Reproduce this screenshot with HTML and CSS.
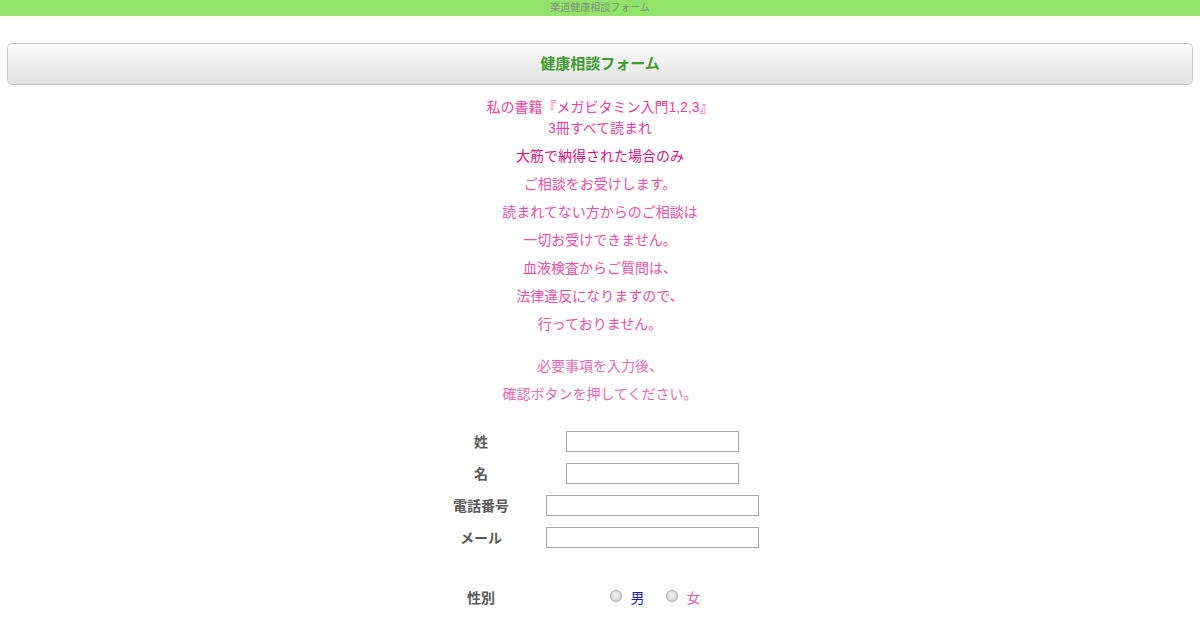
FILE: index.html
```html
<!DOCTYPE html>
<html lang="ja">
<head>
  <meta charset="UTF-8" />
  <title>楽道健康相談フォーム</title>
  <link rel="stylesheet" href="styles.css">
</head>
<body>

<div class="top-bar">楽道健康相談フォーム</div>

<div class="title-box">健康相談フォーム</div>

<div class="intro">
  <p class="books">私の書籍『メガビタミン入門1,2,3』<br>3冊すべて読まれ</p>
  <p class="deep">大筋で納得された場合のみ</p>
  <p>ご相談をお受けします。</p>
  <p>読まれてない方からのご相談は</p>
  <p>一切お受けできません。</p>
  <p>血液検査からご質問は、</p>
  <p>法律違反になりますので、</p>
  <p>行っておりません。</p>
</div>

<div class="intro notice">
  <p>必要事項を入力後、</p>
  <p>確認ボタンを押してください。</p>
</div>

<form class="form">
  <label class="field-label" for="sei">姓</label>
  <div class="field"><input id="sei" class="short" type="text"></div>

  <label class="field-label" for="mei">名</label>
  <div class="field"><input id="mei" class="short" type="text"></div>

  <label class="field-label" for="tel">電話番号</label>
  <div class="field"><input id="tel" class="long" type="text"></div>

  <label class="field-label" for="mail">メール</label>
  <div class="field"><input id="mail" class="long" type="text"></div>

  <div class="field-label gender-row">性別</div>
  <div class="field gender gender-row">
    <label class="radio male"><input type="radio" name="sex" value="male">男</label>
    <label class="radio female"><input type="radio" name="sex" value="female">女</label>
  </div>
</form>

</body>
</html>
```

FILE: styles.css
```css
* { box-sizing: border-box; }
body {
  margin: 0;
  background-color: #fff;
  color: #555;
  font-family: 'Liberation Sans', 'Noto Sans CJK JP', sans-serif;
  font-size: 14px;
}
.top-bar {
  height: 16px;
  line-height: 15px;
  background-color: #92e36a;
  color: #7f8f78;
  font-size: 10px;
  text-align: center;
}
.title-box {
  margin: 27px 7px 0;
  height: 42px;
  line-height: 40px;
  border: 1px solid #c8c8c8;
  border-radius: 5px;
  background: linear-gradient(#fbfbfb, #e2e2e2);
  color: #3f9b30;
  font-size: 15px;
  font-weight: bold;
  text-align: center;
}
.intro {
  margin-top: 12px;
  text-align: center;
  color: #ef4fa6;
}
.intro p {
  margin: 0;
  line-height: 28px;
}
.intro .books {
  line-height: 21px;
  margin-bottom: 3px;
  color: #f03f9f;
}
.intro .deep {
  color: #e2137f;
}
.notice {
  margin-top: 14px;
  color: #f067b2;
}
.form {
  display: grid;
  grid-template-columns: 100px 243px;
  grid-template-rows: repeat(4, 32px) 60px;
  justify-content: center;
  margin: 17px 0 0 5px;
}
.field-label {
  display: flex;
  align-items: center;
  justify-content: center;
  font-weight: bold;
  color: #5a5a5a;
}
.field {
  display: flex;
  align-items: center;
  justify-content: center;
}
.field input[type="text"] {
  height: 21px;
  border: 1px solid #a9a9a9;
  padding: 0 3px;
  margin: 0;
}
.short { width: 173px; }
.long { width: 213px; }
.gender-row {
  padding-top: 28px;
}
.gender {
  gap: 21px;
  padding-left: 5px;
}
.radio {
  display: flex;
  align-items: center;
  gap: 9px;
}
.radio input {
  appearance: none;
  width: 12px;
  height: 12px;
  margin: -3px 0 0;
  border: 1px solid #a5a5a5;
  border-radius: 50%;
  background: radial-gradient(circle at 50% 40%, #f2f2f2, #cdcdcd);
}
.male { color: #1d1dc6; }
.female { color: #ef5aad; }
```
